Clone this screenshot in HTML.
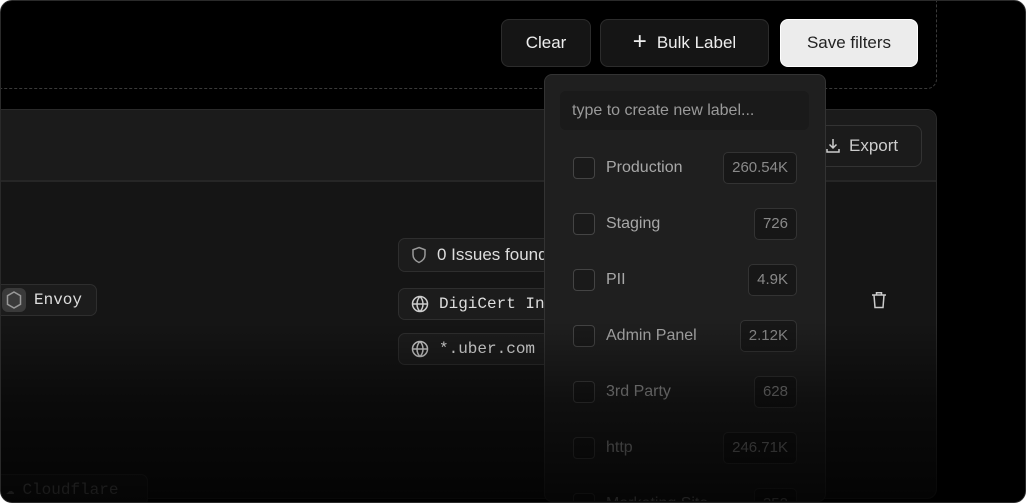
<!DOCTYPE html>
<html><head><meta charset="utf-8"><style>
*{box-sizing:border-box;margin:0;padding:0}
html,body{width:1026px;height:503px;overflow:hidden}
body{background:#fff;font-family:"Liberation Sans",sans-serif;}
.frame{position:absolute;left:0;top:0;width:1026px;height:503px;background:#000;border-radius:12px;border:1px solid #2a2a2a;overflow:hidden}
.dash{position:absolute;left:-10px;top:-10px;width:946px;height:98px;border:1px dashed #3a3a3a;border-radius:10px}
.btn{position:absolute;top:18px;height:48px;border-radius:8px;background:#151515;border:1px solid #2c2c2c;color:#eee;font-size:17px;display:flex;align-items:center;justify-content:center}
.panel{position:absolute;left:-10px;top:108px;width:946px;height:390px;background:#151515;border:1px solid #2a2a2a;border-radius:10px}
.phead{position:absolute;left:0;top:0;right:0;height:72px;background:#1b1b1b;border-bottom:2px solid #262626;border-radius:10px 10px 0 0}
.chip{position:absolute;height:32px;border:1px solid #2e2e2e;background:#1c1c1c;border-radius:7px;color:#ddd;font-family:"Liberation Mono",monospace;font-size:16px;display:flex;align-items:center;gap:10px;padding-left:12px;white-space:nowrap;overflow:hidden}
.dd{position:absolute;left:543px;top:73px;width:282px;height:428px;background:#1f1f1f;border:1px solid #333;border-radius:8px;overflow:hidden}
.inp{position:absolute;left:15px;top:16px;width:249px;height:39px;background:#1a1a1a;border-radius:6px;color:#9a9a9a;font-size:16px;padding:11px 12px}
.row{position:absolute;left:28px;width:224px;height:32px;display:flex;align-items:center}
.cb{width:22px;height:22px;border:1px solid #444;border-radius:4px;background:#1a1a1a}
.lbl{margin-left:11px;color:#a8a8a8;font-size:16px}
.cnt{position:absolute;right:0;top:0;height:32px;padding:0 8px;border:1px solid #333;background:#171717;border-radius:5px;color:#8a8a8a;font-size:15px;line-height:30px}
.fade{position:absolute;left:0;right:0;top:0;bottom:0;background:linear-gradient(to bottom,rgba(0,0,0,0) 0,rgba(0,0,0,0) 64%,rgba(0,0,0,.5) 80%,rgba(0,0,0,.82) 100%);pointer-events:none}
</style></head><body>
<div class="frame">
<div class="dash"></div>
<div class="btn" style="left:500px;width:90px">Clear</div>
<div class="btn" style="left:599px;width:169px"><span style="font-size:24px;font-weight:300;margin-right:10px;margin-top:-3px">+</span>Bulk Label</div>
<div class="btn" style="left:779px;width:138px;background:#ececec;color:#222;border-color:#fff">Save filters</div>

<div class="panel">
 <div class="phead">
  <div style="position:absolute;left:818px;top:15px;width:112px;height:42px;border:1px solid #333;border-radius:8px;color:#ccc;font-size:17px;display:flex;align-items:center;padding-left:14px;gap:8px">
   <svg width="16" height="16" viewBox="0 0 16 16" fill="none" stroke="#ccc" stroke-width="1.5"><path d="M8 1v9M4.5 6.5 8 10l3.5-3.5M2 11v3h12v-3"/></svg>Export</div>
 </div>
</div>

<div class="chip" style="left:-8px;top:283px;width:104px;padding-left:8px;gap:8px">
 <span style="width:24px;height:24px;background:#3a3a3a;border-radius:6px;display:flex;align-items:center;justify-content:center"><svg width="16" height="18" viewBox="0 0 16 18" fill="none" stroke="#999" stroke-width="1.5"><path d="M8 1l6.5 3.7v8.6L8 17l-6.5-3.7V4.7z"/></svg></span>Envoy</div>
<div class="chip" style="left:397px;top:237px;width:160px;font-family:'Liberation Sans',sans-serif;font-size:17px;height:34px">
 <svg width="16" height="18" viewBox="0 0 16 18" fill="none" stroke="#999" stroke-width="1.5"><path d="M8 1.5l6 2.3v5c0 3.6-2.6 6.2-6 7.7-3.4-1.5-6-4.1-6-7.7v-5z"/></svg>0 Issues found</div>
<div class="chip" style="left:397px;top:287px;width:160px">
 <svg width="18" height="18" viewBox="0 0 18 18" fill="none" stroke="#ccc" stroke-width="1.5"><circle cx="9" cy="9" r="7.5"/><path d="M1.5 9h15M9 1.5c-4 4-4 11 0 15M9 1.5c4 4 4 11 0 15"/></svg>DigiCert Inc</div>
<div class="chip" style="left:397px;top:332px;width:160px">
 <svg width="18" height="18" viewBox="0 0 18 18" fill="none" stroke="#ccc" stroke-width="1.5"><circle cx="9" cy="9" r="7.5"/><path d="M1.5 9h15M9 1.5c-4 4-4 11 0 15M9 1.5c4 4 4 11 0 15"/></svg>*.uber.com</div>
<svg style="position:absolute;left:870px;top:290px" width="16" height="18" viewBox="0 0 16 18" fill="none" stroke="#ccc" stroke-width="1.5"><path d="M1 4h14M5.5 4V1.8h5V4M3 4l1 12.5h8L13 4"/></svg>
<div class="chip" style="left:-8px;top:473px;width:155px;color:#777;gap:8px"><span style="font-size:14px">☁</span>Cloudflare</div>

<div class="dd">
 <div class="inp">type to create new label...</div>
 <div class="row" style="top:77px"><div class="cb"></div><span class="lbl">Production</span><span class="cnt">260.54K</span></div>
 <div class="row" style="top:133px"><div class="cb"></div><span class="lbl">Staging</span><span class="cnt">726</span></div>
 <div class="row" style="top:189px"><div class="cb"></div><span class="lbl">PII</span><span class="cnt">4.9K</span></div>
 <div class="row" style="top:245px"><div class="cb"></div><span class="lbl">Admin Panel</span><span class="cnt">2.12K</span></div>
 <div class="row" style="top:301px"><div class="cb"></div><span class="lbl">3rd Party</span><span class="cnt">628</span></div>
 <div class="row" style="top:357px"><div class="cb"></div><span class="lbl">http</span><span class="cnt">246.71K</span></div>
 <div class="row" style="top:413px"><div class="cb"></div><span class="lbl">Marketing Site</span><span class="cnt">352</span></div>
</div>
<div class="fade"></div>
</div>
</body></html>
